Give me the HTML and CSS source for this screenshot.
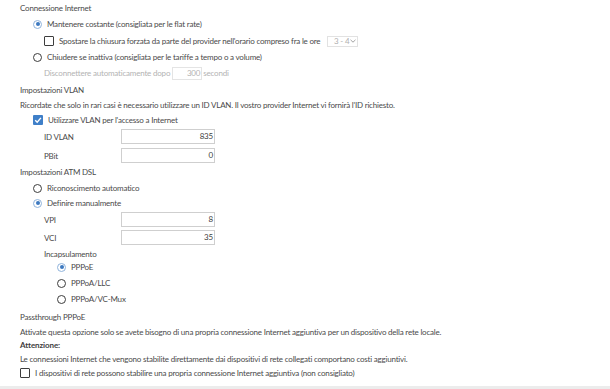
FILE: index.html
```html
<!DOCTYPE html>
<html lang="it">
<head>
<meta charset="utf-8">
<title>Connessione Internet</title>
<link rel="stylesheet" href="styles.css">
</head>
<body>
<div class="page">
  <div class="row title">Connessione Internet</div>
  <div class="row ind1 r-radio1"><span class="radio on"></span><span>Mantenere costante (consigliata per le flat rate)</span></div>
  <div class="row ind2 r-check1"><span class="check"></span><span>Spostare la chiusura forzata da parte del provider nell'orario compreso fra le ore</span><span class="select">3 - 4<svg class="chev" viewBox="0 0 6 4" width="6" height="4"><path d="M0.5 0.8 L3 3.2 L5.5 0.8" fill="none" stroke="#999" stroke-width="0.9"/></svg></span></div>
  <div class="row ind1 r-radio2"><span class="radio"></span><span>Chiudere se inattiva (consigliata per le tariffe a tempo o a volume)</span></div>
  <div class="row ind2b muted r-disc"><span>Disconnettere automaticamente dopo</span><span class="sec-box">300</span><span>secondi</span></div>

  <div class="row title r-vlan">Impostazioni VLAN</div>
  <div class="row r-note">Ricordate che solo in rari casi è necessario utilizzare un ID VLAN. Il vostro provider Internet vi fornirà l'ID richiesto.</div>
  <div class="row ind1 r-check2"><span class="check on"><svg viewBox="0 0 10 10" width="10" height="10"><path d="M2.2 5.2 L4.2 7.2 L7.9 2.9" fill="none" stroke="#fff" stroke-width="1.4"/></svg></span><span>Utilizzare VLAN per l'accesso a Internet</span></div>
  <div class="row field r-idvlan"><span class="lbl">ID VLAN</span><span class="box">835</span></div>
  <div class="row field r-pbit"><span class="lbl">PBit</span><span class="box">0</span></div>

  <div class="row title r-atm">Impostazioni ATM DSL</div>
  <div class="row ind1 r-auto"><span class="radio"></span><span>Riconoscimento automatico</span></div>
  <div class="row ind1 r-man"><span class="radio on"></span><span>Definire manualmente</span></div>
  <div class="row field r-vpi"><span class="lbl">VPI</span><span class="box">8</span></div>
  <div class="row field r-vci"><span class="lbl">VCI</span><span class="box">35</span></div>
  <div class="row ind2b r-incap">Incapsulamento</div>
  <div class="row ind3 r-pppoe"><span class="radio on"></span><span>PPPoE</span></div>
  <div class="row ind3"><span class="radio"></span><span>PPPoA/LLC</span></div>
  <div class="row ind3"><span class="radio"></span><span>PPPoA/VC-Mux</span></div>

  <div class="row title r-pass">Passthrough PPPoE</div>
  <div class="row r-attiv">Attivate questa opzione solo se avete bisogno di una propria connessione Internet aggiuntiva per un dispositivo della rete locale.</div>
  <div class="row strong r-att">Attenzione:</div>
  <div class="row r-conn">Le connessioni Internet che vengono stabilite direttamente dai dispositivi di rete collegati comportano costi aggiuntivi.</div>
  <div class="row r-check3"><span class="check"></span><span>I dispositivi di rete possono stabilire una propria connessione Internet aggiuntiva (non consigliato)</span></div>
</div>
<div class="rule"></div>
</body>
</html>
```
FILE: styles.css
```css
html, body {
  margin: 0;
  padding: 0;
  background: #fff;
}
body {
  font-family: Lato, "Noto Sans", sans-serif;
  font-size: 8px;
  letter-spacing: -0.2px;
  color: #4a4a4a;
  width: 610px;
  height: 389px;
  overflow: hidden;
}
.page {
  padding: 0 0 0 20px;
  height: 386px;
}
.row {
  display: flex;
  align-items: center;
  height: 16px;
  white-space: nowrap;
}
.ind1 { padding-left: 13px; }
.ind2 { padding-left: 24px; }
.ind2b { padding-left: 24px; }
.ind3 { padding-left: 37px; }
.muted { color: #b3b3b3; }
.strong { font-weight: bold; color: #3d3d3d; letter-spacing: -0.1px; }

.radio {
  width: 9px;
  height: 9px;
  border: 1px solid #3d3d3d;
  border-radius: 50%;
  box-sizing: border-box;
  margin-right: 5px;
  flex: none;
  position: relative;
}
.radio.on {
  border-color: #8fb3dc;
  background: #fff;
}
.radio.on::after {
  content: "";
  position: absolute;
  left: 1.5px;
  top: 1.5px;
  width: 4px;
  height: 4px;
  border-radius: 50%;
  background: #3d79c0;
}
.check {
  width: 10px;
  height: 10px;
  border: 1px solid #3d3d3d;
  border-radius: 1px;
  box-sizing: border-box;
  margin-right: 5px;
  flex: none;
  display: flex;
}
.check.on {
  border: none;
  background: #3f7fc8;
}
.select {
  margin-left: 7px;
  width: 31px;
  height: 11px;
  border: 1px solid #e2e2e2;
  box-sizing: border-box;
  color: #b0b0b0;
  display: flex;
  align-items: center;
  justify-content: flex-end;
  gap: 1px;
  padding-right: 1px;
}
.sec-box {
  width: 30px;
  height: 13px;
  border: 1px solid #e4e4e4;
  box-sizing: border-box;
  margin: 0 1px 0 2px;
  text-align: right;
  padding-right: 1px;
  line-height: 11px;
}
.field {
  padding-left: 24px;
}
.lbl {
  width: 77px;
  flex: none;
}
.box {
  width: 94px;
  height: 15px;
  border: 1px solid #cfcfcf;
  box-sizing: border-box;
  text-align: right;
  padding-right: 1px;
  line-height: 13px;
  color: #3d3d3d;
}

.r-check1 { margin-top: 1px; }
.r-vlan { margin-top: 1px; }
.r-note { margin-top: -1px; }
.r-check2 { margin-top: -1px; }
.r-idvlan { height: 17px; }
.r-pbit { margin-top: 2px; height: 17px; }
.r-atm { margin-top: 0; }
.r-man { margin-top: -1px; }
.r-vpi { height: 17px; }
.r-vci { margin-top: 1px; height: 17px; }
.r-pppoe { margin-top: -3px; }
.r-pass { margin-top: 2px; }
.r-attiv { margin-top: -1px; }
.r-att { margin-top: -3px; }
.r-conn { margin-top: -2px; }
.r-check3 { margin-top: -2px; }

.rule {
  height: 3px;
  background: #ececec;
}
```
